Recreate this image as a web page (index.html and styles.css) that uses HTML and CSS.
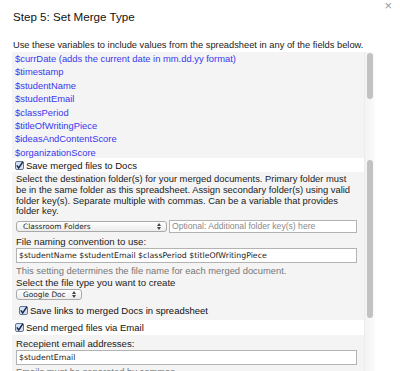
FILE: index.html
```html
<!DOCTYPE html>
<html>
<head>
<meta charset="utf-8">
<link rel="stylesheet" href="styles.css">
</head>
<body>
<div class="dialog">
  <div class="header">
    <h1 class="title">Step 5: Set Merge Type</h1>
    <span class="close">×</span>
  </div>
  <p class="intro">Use these variables to include values from the spreadsheet in any of the fields below.</p>

  <div class="pane">
    <div class="vars">
      <div class="var">$currDate (adds the current date in mm.dd.yy format)</div>
      <div class="var">$timestamp</div>
      <div class="var">$studentName</div>
      <div class="var">$studentEmail</div>
      <div class="var">$classPeriod</div>
      <div class="var">$titleOfWritingPiece</div>
      <div class="var">$ideasAndContentScore</div>
      <div class="var">$organizationScore</div>
    </div>
    <div class="track"><div class="thumb thumb-vars"></div></div>
  </div>

  <div class="pane">
    <div class="main">
      <label class="check-row">
        <svg class="cb" viewBox="0 0 9 9" width="9" height="9"><rect x="0.5" y="0.5" width="8" height="8" rx="1.5" fill="#d4e3f8" stroke="#66758f"/><path d="M1.8 4.4 L3.7 6.9 L8 0.6" fill="none" stroke="#1b2846" stroke-width="1.5"/></svg>
        <span>Save merged files to Docs</span>
      </label>
      <div class="section docs">
        <p class="para">Select the destination folder(s) for your merged documents. Primary folder must be in the same folder as this spreadsheet. Assign secondary folder(s) using valid folder key(s). Separate multiple with commas. Can be a variable that provides folder key.</p>
        <div class="folder-row">
          <div class="select select-wide"><span>Classroom Folders</span><svg class="arrows" viewBox="0 0 4 7" width="4" height="7"><path d="M0 3 L2 0 L4 3 Z M0 4 L2 7 L4 4 Z" fill="#444"/></svg></div>
          <div class="input placeholder">Optional: Additional folder key(s) here</div>
        </div>
        <p class="label">File naming convention to use:</p>
        <div class="input field">$studentName $studentEmail $classPeriod $titleOfWritingPiece</div>
        <p class="hint">This setting determines the file name for each merged document.</p>
        <p class="label tight">Select the file type you want to create</p>
        <div class="select select-small"><span>Google Doc</span><svg class="arrows" viewBox="0 0 4 7" width="4" height="7"><path d="M0 3 L2 0 L4 3 Z M0 4 L2 7 L4 4 Z" fill="#444"/></svg></div>
        <label class="check-row inner">
          <svg class="cb" viewBox="0 0 9 9" width="9" height="9"><rect x="0.5" y="0.5" width="8" height="8" rx="1.5" fill="#d4e3f8" stroke="#66758f"/><path d="M1.8 4.4 L3.7 6.9 L8 0.6" fill="none" stroke="#1b2846" stroke-width="1.5"/></svg>
          <span>Save links to merged Docs in spreadsheet</span>
        </label>
      </div>
      <label class="check-row email-row">
        <svg class="cb" viewBox="0 0 9 9" width="9" height="9"><rect x="0.5" y="0.5" width="8" height="8" rx="1.5" fill="#d4e3f8" stroke="#66758f"/><path d="M1.8 4.4 L3.7 6.9 L8 0.6" fill="none" stroke="#1b2846" stroke-width="1.5"/></svg>
        <span>Send merged files via Email</span>
      </label>
      <div class="section email">
        <p class="label">Recepient email addresses:</p>
        <div class="input field">$studentEmail</div>
        <p class="hint">Emails must be separated by commas</p>
      </div>
    </div>
    <div class="track"><div class="thumb thumb-main"></div></div>
  </div>
</div>
</body>
</html>
```

FILE: styles.css
```css
html, body {
  margin: 0;
  padding: 0;
  background: #fff;
}
body {
  width: 400px;
  height: 371px;
  overflow: hidden;
  font-family: "Liberation Sans", Arial, sans-serif;
  color: #222;
}
p { margin: 0; }

.dialog {
  padding: 0 8px 0 12px;
}

.header {
  display: flex;
  justify-content: space-between;
  align-items: flex-start;
}
.title {
  margin: 10px 0 0 1px;
  font-size: 11.6px;
  line-height: 14px;
  font-weight: normal;
  color: #111;
}
.close {
  font-size: 13px;
  line-height: 12px;
  color: #9a9a9a;
  margin-top: 0;
}

.intro {
  margin: 15px 0 1px 1px;
  font-size: 9.3px;
  line-height: 12px;
  color: #222;
}

.pane {
  display: flex;
  width: 363px;
}

.vars {
  flex: 1;
  height: 106px;
  overflow: hidden;
  background: #f4f4f4;
  padding-left: 3px;
}
.var {
  color: #3838f0;
  font-size: 9.4px;
  line-height: 13.4px;
  white-space: nowrap;
}

.track {
  width: 11px;
  box-sizing: border-box;
  border-left: 1px solid #ececec;
  background: linear-gradient(to right, #f3f3f3, #fbfbfb);
}
.thumb {
  width: 6px;
  margin-left: 2px;
  background: #c2c2c2;
  border-radius: 3px;
}
.thumb-vars {
  margin-top: 1px;
  height: 46px;
}
.thumb-main {
  margin-top: 2px;
  height: 158px;
}

.main {
  flex: 1;
  height: 213px;
  overflow: hidden;
}

.check-row {
  display: flex;
  align-items: center;
  gap: 2px;
  height: 14px;
  padding-left: 3px;
  font-size: 9.5px;
  color: #111;
  white-space: nowrap;
}
.check-row .cb {
  flex: none;
}
.email-row {
  height: 15px;
}
.check-row.inner {
  margin-top: 4px;
  padding-left: 3px;
  height: 14px;
}

.section {
  background: #f4f4f4;
  padding: 2px 7px 2px 4px;
}
.section.email {
  padding-top: 3px;
}

.para {
  font-size: 9.4px;
  line-height: 10.8px;
  color: #222;
}

.folder-row {
  display: flex;
  align-items: center;
  gap: 2px;
  margin-top: 3px;
  height: 13px;
}

.select {
  box-sizing: border-box;
  display: flex;
  align-items: center;
  justify-content: space-between;
  height: 11px;
  padding: 0 5px 0 6px;
  border: 1px solid #a9a9a9;
  border-radius: 3px;
  background: linear-gradient(#ffffff, #ececec);
  font-family: "DejaVu Sans", sans-serif;
  font-size: 7.4px;
  color: #222;
}
.select-wide {
  width: 151px;
}
.select-small {
  width: 66px;
  margin-top: 1px;
}

.input {
  box-sizing: border-box;
  height: 13px;
  border: 1px solid #b3b3b3;
  background: #fff;
  font-family: "DejaVu Sans", sans-serif;
  font-size: 7.8px;
  line-height: 11px;
  padding-left: 2px;
  white-space: nowrap;
  overflow: hidden;
}
.placeholder {
  flex: 1;
  color: #8a8a8a;
  font-family: "Liberation Sans", Arial, sans-serif;
  font-size: 8.6px;
}
.field {
  height: 15px;
  line-height: 13px;
  margin-top: 1px;
  color: #222;
}

.label {
  margin-top: 3px;
  font-size: 9.6px;
  line-height: 11px;
  color: #222;
}
.label.tight {
  margin-top: 0;
}
.section.email .label {
  margin-top: 0;
}

.hint {
  margin-top: 3px;
  font-size: 9.4px;
  line-height: 10.8px;
  color: #777;
}
.section.email .hint {
  margin-top: 2px;
}
```
